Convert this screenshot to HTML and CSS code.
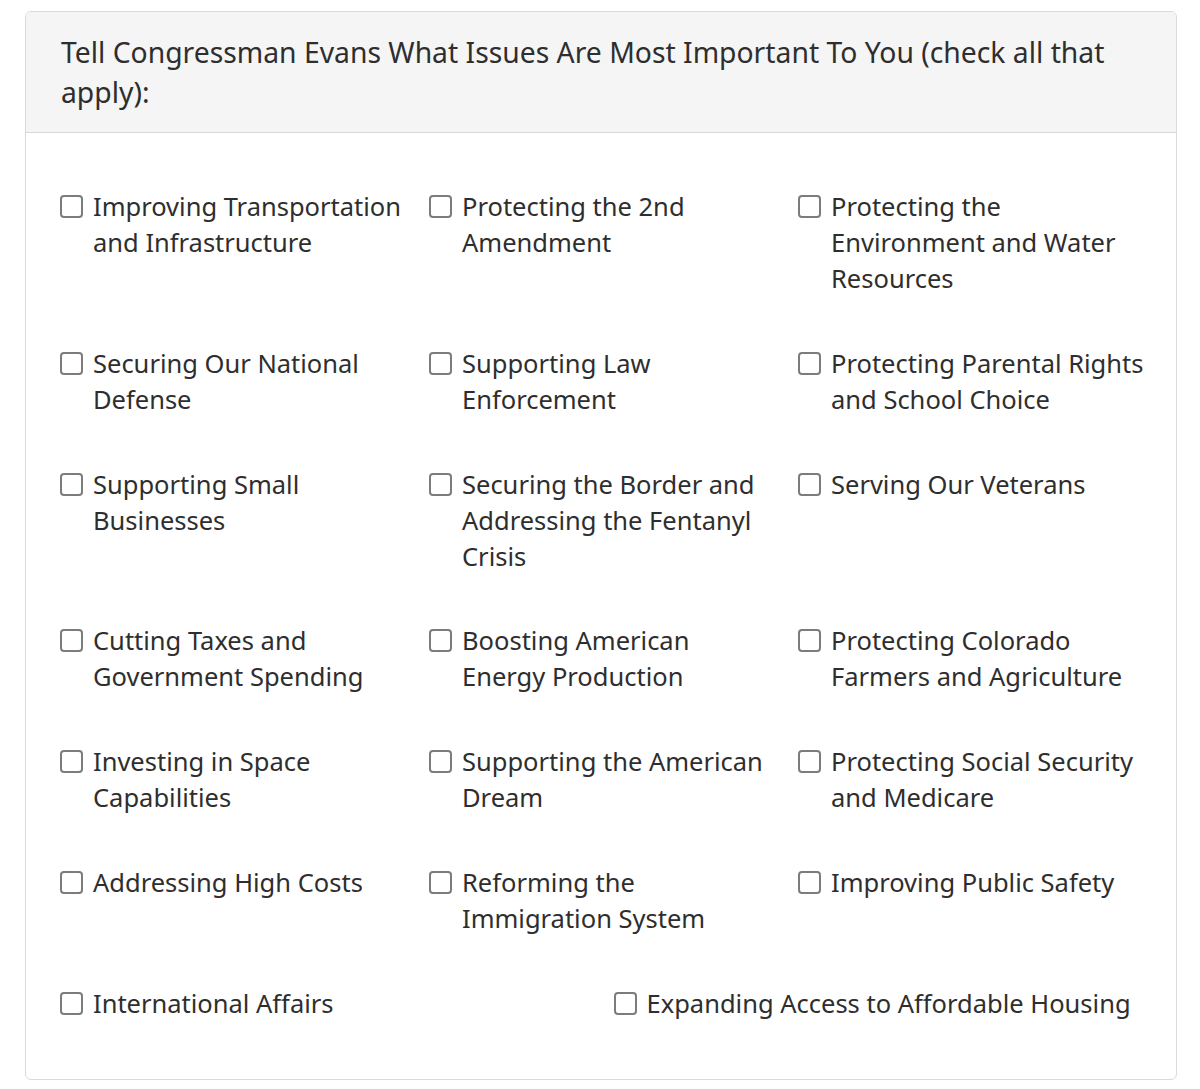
FILE: index.html
```html
<!DOCTYPE html>
<html lang="en">
<head>
<meta charset="utf-8">
<title>Issues</title>
<link rel="stylesheet" href="styles.css">
</head>
<body>
<div class="card">
  <div class="card-header">Tell Congressman Evans What Issues Are Most Important To You (check all that apply):</div>
  <div class="card-body">
    <label class="item"><input type="checkbox" class="box"><span class="text">Improving Transportation and Infrastructure</span></label>
    <label class="item"><input type="checkbox" class="box"><span class="text">Protecting the 2nd Amendment</span></label>
    <label class="item"><input type="checkbox" class="box"><span class="text">Protecting the Environment and Water Resources</span></label>

    <label class="item"><input type="checkbox" class="box"><span class="text">Securing Our National Defense</span></label>
    <label class="item"><input type="checkbox" class="box"><span class="text">Supporting Law Enforcement</span></label>
    <label class="item"><input type="checkbox" class="box"><span class="text">Protecting Parental Rights and School Choice</span></label>

    <label class="item"><input type="checkbox" class="box"><span class="text">Supporting Small Businesses</span></label>
    <label class="item"><input type="checkbox" class="box"><span class="text">Securing the Border and Addressing the Fentanyl Crisis</span></label>
    <label class="item"><input type="checkbox" class="box"><span class="text">Serving Our Veterans</span></label>

    <label class="item"><input type="checkbox" class="box"><span class="text">Cutting Taxes and Government Spending</span></label>
    <label class="item"><input type="checkbox" class="box"><span class="text">Boosting American Energy Production</span></label>
    <label class="item"><input type="checkbox" class="box"><span class="text">Protecting Colorado Farmers and Agriculture</span></label>

    <label class="item"><input type="checkbox" class="box"><span class="text">Investing in Space Capabilities</span></label>
    <label class="item"><input type="checkbox" class="box"><span class="text">Supporting the American Dream</span></label>
    <label class="item"><input type="checkbox" class="box"><span class="text">Protecting Social Security and Medicare</span></label>

    <label class="item"><input type="checkbox" class="box"><span class="text">Addressing High Costs</span></label>
    <label class="item"><input type="checkbox" class="box"><span class="text">Reforming the Immigration System</span></label>
    <label class="item"><input type="checkbox" class="box"><span class="text">Improving Public Safety</span></label>

    <label class="item item-half"><input type="checkbox" class="box"><span class="text">International Affairs</span></label>
    <label class="item item-half"><input type="checkbox" class="box"><span class="text text-wide">Expanding Access to Affordable Housing</span></label>
  </div>
</div>
</body>
</html>
```
FILE: styles.css
```css
* { box-sizing: border-box; }

body {
  margin: 0;
  padding: 11px 24px 0 25px;
  background: #ffffff;
  font-family: "Noto Sans", "Open Sans", sans-serif;
  color: #2e2e2e;
}

.card {
  width: 1152px;
  border: 1px solid #dadada;
  border-radius: 6px;
  background: #ffffff;
  overflow: hidden;
}

.card-header {
  background: #f5f5f5;
  border-bottom: 1px solid #d8d8d8;
  padding: 20px 60px 20px 35px;
  font-size: 28.3px;
  line-height: 40px;
  color: #2e2e2e;
}

.card-body {
  display: grid;
  grid-template-columns: repeat(6, 184.5px);
  row-gap: 48.8px;
  padding: 55px 0 58px 34px;
}

.item {
  grid-column: span 2;
  display: flex;
  align-items: flex-start;
  gap: 10px;
  font-size: 25.5px;
  line-height: 36px;
  cursor: pointer;
}

.item-half {
  grid-column: span 3;
}

.box {
  -webkit-appearance: none;
  appearance: none;
  flex: none;
  width: 23px;
  height: 23px;
  margin: 7px 0 0 0;
  border: 2px solid #7c7c7c;
  border-radius: 4px;
  background: #ffffff;
}

.text {
  max-width: 316px;
}

.text-wide {
  max-width: none;
}
```
